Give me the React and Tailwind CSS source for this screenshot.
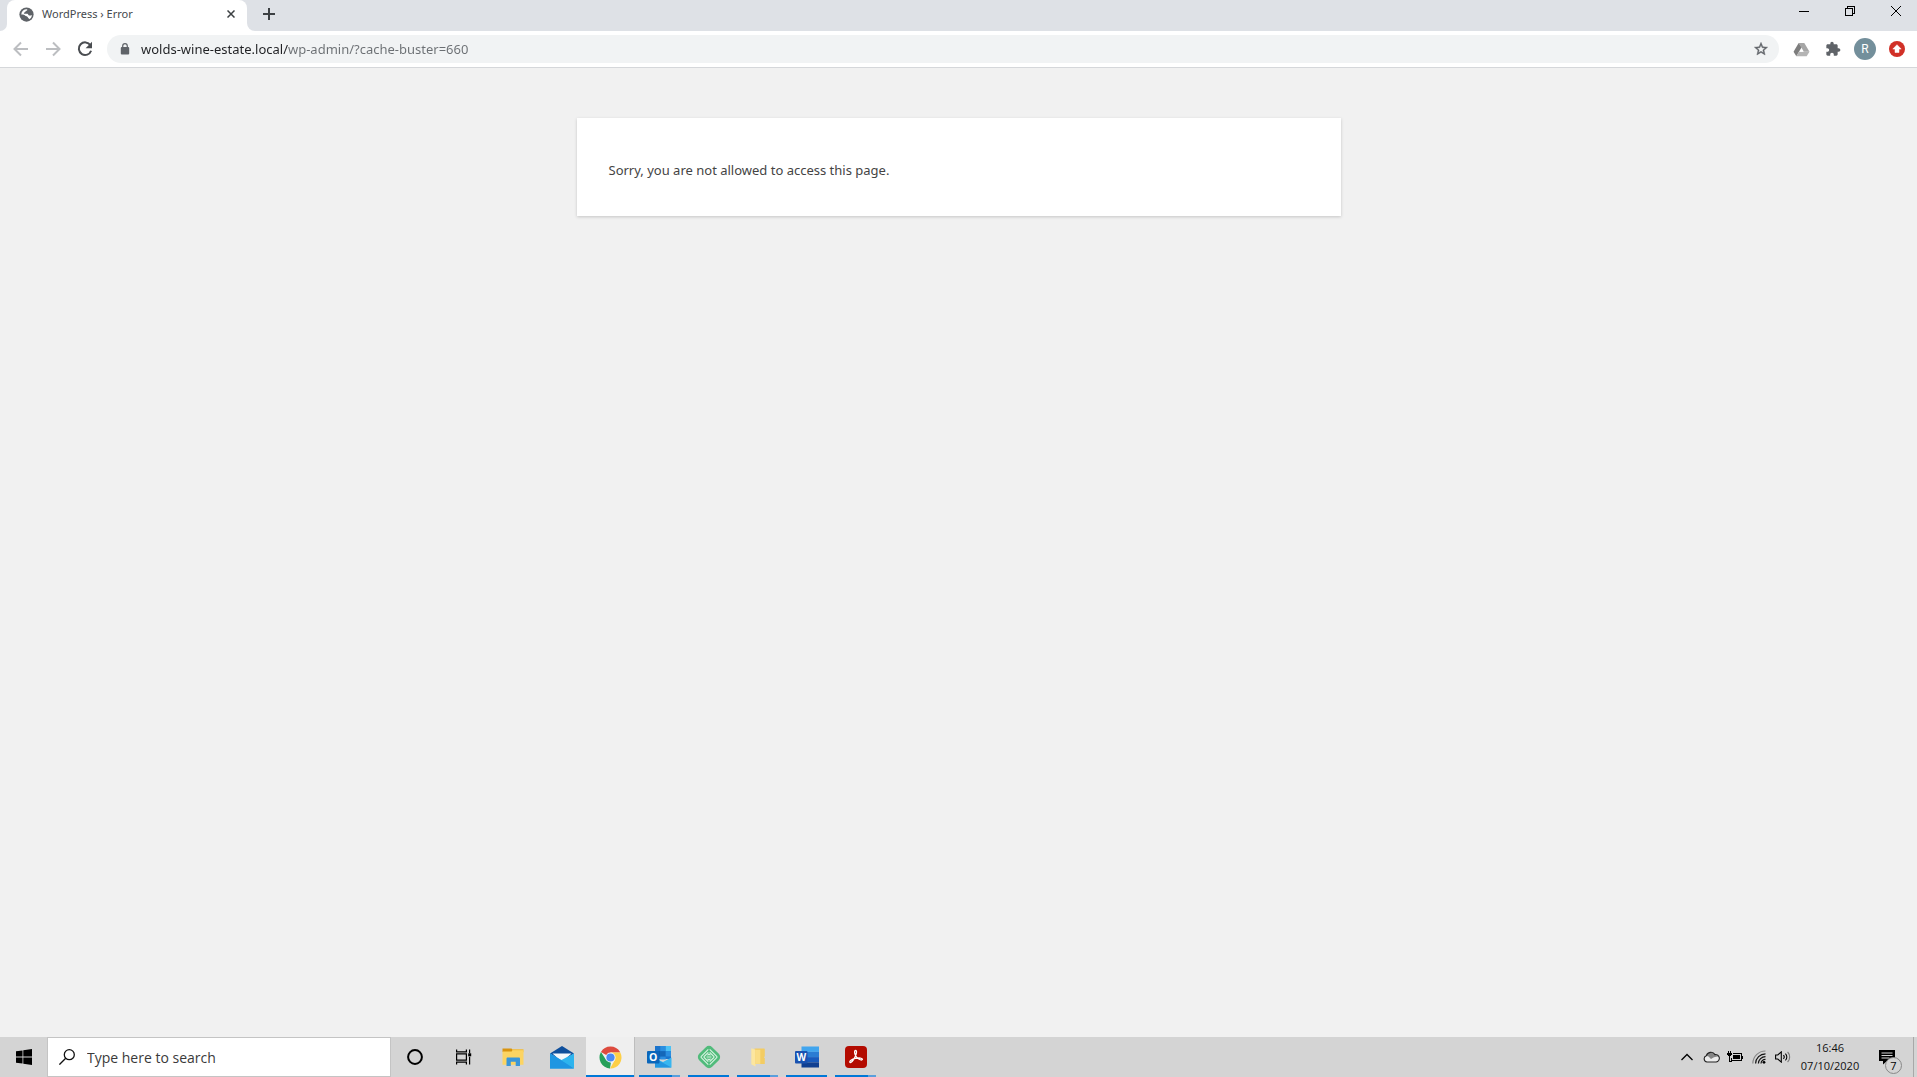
import React, { useState } from 'react';

function GlobeIcon() {
    return (
        <svg viewBox="0 0 16 16" className="w-[15px] h-[15px] shrink-0">
            <circle cx="8" cy="8" r="7.6" fill="#5f6368" />
            <path d="M8.600 2.300c.6.9.1 1.500-.9 1.700-.9.2-.6 1.300-1.500 1.600-.7.3-1.200.5-.9 1.200.3.700 2.600.3 3.600.5 1.100.3.900 1.600 2.100 1.800.8.1 1.700-.2 3-.3a5.700 5.700 0 0 1-3.200 4.200c-.1-1-1.300-1-1.400-2-.1-1.300-2.200-.8-3-1.900-.7-1-2-1.300-4-1.200A5.900 5.900 0 0 1 8.600 2.300z" fill="#fff" />
        </svg>
    );
}

function BackIcon() {
    return (
        <svg viewBox="0 0 16 16" className="w-4 h-4" fill="none" stroke="currentColor" strokeWidth="2">
            <path d="M15 8H2.500M8 1.500 1.500 8 8 14.500" />
        </svg>
    );
}

function ForwardIcon() {
    return (
        <svg viewBox="0 0 16 16" className="w-4 h-4" fill="none" stroke="currentColor" strokeWidth="2">
            <path d="M1 8h12.500M8 1.500 14.500 8 8 14.500" />
        </svg>
    );
}

function ReloadIcon() {
    return (
        <svg viewBox="0 0 16 16" className="w-4 h-4" fill="none">
            <path d="M13.400 4.200A6.300 6.300 0 1 0 14.100 9.700" stroke="#4a4d51" strokeWidth="2" />
            <path d="M15 .8v6.400H8.600z" fill="#4a4d51" />
        </svg>
    );
}

function LockIcon() {
    return (
        <svg viewBox="0 0 10 12" className="w-[10px] h-3 shrink-0">
            <rect x=".8" y="4" width="8.400" height="7.600" rx="1" fill="#5f6368" />
            <path d="M2.700 4.500V3a2.300 2.300 0 0 1 4.600 0v1.500" fill="none" stroke="#5f6368" strokeWidth="1.200" />
        </svg>
    );
}

function StarIcon() {
    return (
        <svg viewBox="0 0 24 24" className="w-4 h-4">
            <path d="M22 9.240l-7.190-.62L12 2 9.190 8.630 2 9.240l5.460 4.730L5.820 21 12 17.270 18.180 21l-1.630-7.030L22 9.240zM12 15.400l-3.760 2.270 1-4.280-3.320-2.880 4.380-.38L12 6.100l1.710 4.040 4.380.38-3.320 2.880 1 4.280L12 15.400z" fill="#5f6368" stroke="#5f6368" strokeWidth=".6" />
        </svg>
    );
}

function DriveIcon() {
    return (
        <svg viewBox="0 0 18 16" className="w-[17px] h-[15px]">
            <path d="M6 1h6l5.500 9.500h-6z" fill="#a6a6a6" />
            <path d="M6 1 .5 10.500l3 4.700L9 5.800z" fill="#7d7d7d" />
            <path d="M6.200 10.300h11.300l-3 4.900h-11z" fill="#b4b4b4" />
            <path d="M9 7.300 7.200 10.300h3.600z" fill="#fff" />
        </svg>
    );
}

function PuzzleIcon() {
    return (
        <svg viewBox="0 0 24 24" className="w-4 h-4">
            <path d="M20.500 11H19V7c0-1.100-.9-2-2-2h-4V3.500C13 2.120 11.880 1 10.500 1S8 2.120 8 3.500V5H4c-1.100 0-1.990.9-1.990 2v3.800H3.500c1.490 0 2.700 1.210 2.700 2.700s-1.210 2.700-2.700 2.700H2V20c0 1.100.9 2 2 2h3.800v-1.500c0-1.490 1.210-2.700 2.700-2.700 1.490 0 2.700 1.210 2.700 2.700V22H17c1.100 0 2-.9 2-2v-4h1.500c1.380 0 2.500-1.120 2.500-2.500S21.880 11 20.500 11z" fill="#5f6368" />
        </svg>
    );
}

function UploadBadge() {
    return (
        <svg viewBox="0 0 16 16" className="w-4 h-4">
            <circle cx="8" cy="8" r="8" fill="#d13027" />
            <path d="M8 3.700 12.200 8.100H10v3.400H6V8.100H3.800z" fill="#fff" stroke="#fff" strokeWidth=".5" strokeLinejoin="round" />
        </svg>
    );
}

function WindowsIcon() {
    return (
        <svg viewBox="0 0 16 16" className="w-4 h-4" fill="#000">
            <path d="M0 2.300 6.500 1.400v6.200H0zM7.300 1.300 16 0v7.600H7.300zM0 8.400h6.500v6.200L0 13.700zM7.300 8.400H16V16l-8.700-1.300z" />
        </svg>
    );
}

function MagnifierIcon() {
    return (
        <svg viewBox="0 0 16 16" className="w-4 h-4 shrink-0" fill="none" stroke="#111" strokeWidth="1.300">
            <circle cx="10.300" cy="5.700" r="5" />
            <path d="M6.700 9.300.4 15.600" />
        </svg>
    );
}

function CortanaIcon() {
    return (
        <svg viewBox="0 0 16 16" className="w-4 h-4">
            <circle cx="8" cy="8" r="6.900" fill="none" stroke="#000" strokeWidth="2" />
        </svg>
    );
}

function TaskViewIcon() {
    return (
        <svg viewBox="0 0 17 16" className="w-[17px] h-4" fill="none" stroke="#000" strokeWidth="1.200">
            <path d="M1.600.5v2.400h9.800V.5M1.600 15.500v-2.400h9.800v2.400M1.600 4.800h9.800v6.400H1.600zM14.600.5v3.800M14.600 7.800v7.700" />
            <path d="M13.200 4.300h3v3h-3z" fill="#000" stroke="none" />
        </svg>
    );
}

function ExplorerIcon() {
    return (
        <svg viewBox="0 0 22 20" className="w-[22px] h-5">
            <path d="M.5 1.500h9l1.500 1.800V5H.5z" fill="#d9940f" />
            <path d="M10 2.200h11.500v3H10z" fill="#f3bd3a" />
            <path d="M.5 4.600h9L11 3.300h10.500v14.400H.5z" fill="#fcd462" />
            <path d="M4.500 19v-7.300c0-.7.500-1.200 1.200-1.200h11.100c.7 0 1.200.5 1.200 1.200V19h-4.300v-4.300H8.800V19z" fill="#3a96d8" />
        </svg>
    );
}

function MailIcon() {
    return (
        <svg viewBox="0 0 24 23" className="w-6 h-[23px]">
            <path d="M12 0 24 7.500 12 15 0 7.500z" fill="#0f4f9c" />
            <path d="M2.500 7.500h19L12 16z" fill="#f4f8fc" />
            <path d="M0 7.500 14 15.500 24 22.500H0z" fill="#1f9be6" />
            <path d="M24 7.500v15L10.500 14.500z" fill="#2db4ee" />
            <path d="M0 22.500h24L11.500 14.500 0 7.500z" fill="#1e96e2" />
        </svg>
    );
}

function ChromeIcon() {
    return (
        <svg viewBox="0 0 24 24" className="w-[23px] h-[23px]">
            <path d="M12 12 2.040 6.250A11.500 11.500 0 0 1 21.960 6.250L22 6.700H12z" fill="#dd4b3e" />
            <path d="M2.040 6.250 7.450 14.600l5 2.600-1 6.280A11.500 11.500 0 0 1 2.040 6.250z" fill="#26a05a" />
            <path d="M16.550 14.600 11.500 23.500A11.500 11.500 0 0 0 22.220 6.750H12z" fill="#fdcf47" />
            <circle cx="12" cy="12" r="5.300" fill="#f4f6f8" />
            <circle cx="12" cy="12" r="4.300" fill="#4a8af4" />
        </svg>
    );
}

function OutlookIcon() {
    return (
        <svg viewBox="0 0 25 22" className="w-[25px] h-[22px]">
            <path d="M8 0h16v13H8z" fill="#1b74cc" />
            <path d="M13.300 0h5.400v5.200h-5.400zM13.300 10.400h5.400v3h-5.400z" fill="#2a8ee0" />
            <path d="M18.700 0H24v5.200h-5.300z" fill="#4cc2f5" />
            <path d="M8 5.200h5.300v5.200H8z" fill="#0f56a3" />
            <path d="M13.300 5.200h5.400v5.200h-5.400z" fill="#1467b8" />
            <path d="M18.700 5.200H24v5.200h-5.300z" fill="#2a8ee0" />
            <path d="M8 12.500 16 16l8.500-4.500v10H8z" fill="#38b6f0" />
            <path d="M8 12.500 24.500 21.500H8z" fill="#2496e0" />
            <rect x="0" y="5" width="12.500" height="12.500" rx="1" fill="#0a66ba" />
            <text x="6.250" y="15" textAnchor="middle" fontSize="10.500" fontWeight="700" fontFamily="Open Sans, sans-serif" fill="#fff">O</text>
        </svg>
    );
}

function LocalIcon() {
    return (
        <svg viewBox="0 0 24 24" className="w-6 h-6">
            <rect x="2.800" y="2.800" width="18.400" height="18.400" rx="4.500" transform="rotate(45 12 12)" fill="#51bb7b" />
            <g fill="none" stroke="#d6f3e0" strokeWidth="1.100">
                <path d="M11.300 4.300 4.300 11.300a1 1 0 0 0 0 1.400l7 7M12.700 4.300l7 7a1 1 0 0 1 0 1.400l-7 7" />
                <path d="M11.300 7.300 7.100 11.500v1l4.200 4.200M12.700 7.300l4.200 4.200v1l-4.200 4.200" />
                <path d="M9.500 12h5M10.500 10.200 12 9l1.500 1.200M10.500 13.800 12 15l1.500-1.200" />
            </g>
        </svg>
    );
}

function FolderIcon() {
    return (
        <svg viewBox="0 0 14 20" className="w-[14px] h-5">
            <path d="M3.500 1.500h9.700a.6.6 0 0 1 .6.6v7.100l-.9 1 .9 1v5.700H3.500z" fill="#f3cc63" />
            <path d="M.3 1.200 4.500 2.800v16.700L.3 17.200z" fill="#fce69f" />
            <path d="M4.500 2.800h4.800v14.100H4.500z" fill="#fadd86" />
        </svg>
    );
}

function WordIcon() {
    return (
        <svg viewBox="0 0 24 22" className="w-6 h-[22px]">
            <path d="M6.500.5H24v5.400H6.500z" fill="#41a5ee" />
            <path d="M6.500 5.900H24v5.200H6.500z" fill="#2b7cd3" />
            <path d="M6.500 11.100H24v5.200H6.500z" fill="#185abd" />
            <path d="M6.500 16.300H24v5.200H6.500z" fill="#103f91" />
            <rect x="0" y="5" width="12.500" height="12.500" rx="1" fill="#1a52b0" />
            <text x="6.250" y="14.800" textAnchor="middle" fontSize="10" fontWeight="700" fontFamily="Open Sans, sans-serif" fill="#fff">W</text>
        </svg>
    );
}

function AcrobatIcon() {
    return (
        <svg viewBox="0 0 22 22" className="w-[22px] h-[22px]">
            <rect width="22" height="22" rx="4" fill="#b30b00" />
            <path d="M10.500 4.500c1.600 0 1.200 3.200-.6 6.700-1.600 3.200-3.800 5.900-4.800 5.200-1.300-1 1.700-3.200 5.400-4 3.800-.8 7-.4 6.900.9-.1 1.500-3.500.4-5.800-2.200-2.200-2.500-2.600-6.600-1.100-6.600z" fill="none" stroke="#fff" strokeWidth="1.300" />
        </svg>
    );
}

const apps = [
    { name: 'File Explorer', icon: ExplorerIcon },
    { name: 'Mail', icon: MailIcon },
    { name: 'Google Chrome', icon: ChromeIcon, running: true, active: true },
    { name: 'Outlook', icon: OutlookIcon, running: true, grouped: true },
    { name: 'Local', icon: LocalIcon, running: true },
    { name: 'Documents', icon: FolderIcon, running: true, grouped: true },
    { name: 'Word', icon: WordIcon, running: true },
    { name: 'Acrobat Reader', icon: AcrobatIcon, running: true, grouped: true },
];

function TabStrip() {
    return (
        <div className="flex h-[31px] bg-white">
            <div className="w-[7px] bg-[#dee1e6] rounded-br-lg"></div>
            <div className="w-60 bg-[#dee1e6]">
                <div className="h-full flex items-center pl-3 pr-2 pb-[3px] bg-white rounded-t-lg">
                    <GlobeIcon />
                    <span className="flex-1 ml-2 text-[11px] leading-4 text-[#45494d] whitespace-nowrap">WordPress › Error</span>
                    <button aria-label="Close tab" className="w-4 h-4 flex items-center justify-center">
                        <svg viewBox="0 0 8 8" className="w-2 h-2" stroke="#3c4043" strokeWidth="1.500">
                            <path d="M.5.500l7 7M7.500.500l-7 7" />
                        </svg>
                    </button>
                </div>
            </div>
            <div className="flex-1 flex justify-between bg-[#dee1e6] rounded-bl-lg">
                <button aria-label="New tab" className="w-11 h-7 flex items-center justify-center">
                    <svg viewBox="0 0 12 12" className="w-3 h-3" stroke="#3c4043" strokeWidth="2">
                        <path d="M6 0v12M0 6h12" />
                    </svg>
                </button>
                <div className="flex h-[22px]">
                    <button aria-label="Minimize" className="w-[46px] pl-1 flex items-center justify-center">
                        <svg viewBox="0 0 10 10" className="w-[10px] h-[10px]" stroke="#000" shapeRendering="crispEdges">
                            <path d="M0 5.500h10" />
                        </svg>
                    </button>
                    <button aria-label="Restore" className="w-[46px] pl-1 flex items-center justify-center">
                        <svg viewBox="0 0 10 10" className="w-[10px] h-[10px]" fill="none" stroke="#000" shapeRendering="crispEdges">
                            <path d="M.5 2.500h7v7h-7zM2.500 2.500v-2h7v7h-2" />
                        </svg>
                    </button>
                    <button aria-label="Close" className="w-[46px] pl-1 flex items-center justify-center">
                        <svg viewBox="0 0 10 10" className="w-[10px] h-[10px]" stroke="#000">
                            <path d="M0 0l10 10M10 0 0 10" />
                        </svg>
                    </button>
                </div>
            </div>
        </div>
    );
}

function Toolbar() {
    const [url, setUrl] = useState('wolds-wine-estate.local/wp-admin/?cache-buster=660');

    return (
        <div className="flex items-center h-[37px] pl-[5px] pr-1 bg-white border-b border-[#d5d7da]">
            <button aria-label="Back" className="w-8 h-8 flex items-center justify-center text-[#bcbec1]"><BackIcon /></button>
            <button aria-label="Forward" className="w-8 h-8 flex items-center justify-center text-[#bcbec1]"><ForwardIcon /></button>
            <button aria-label="Reload" className="w-8 h-8 flex items-center justify-center"><ReloadIcon /></button>
            <div className="flex-1 flex items-center h-7 mx-1.5 pl-[13px] pr-[10px] bg-[#f1f3f4] rounded-full">
                <LockIcon />
                {/* host part is darker than the path */}
                <input
                    aria-label="Address"
                    value={url}
                    onChange={(e) => setUrl(e.target.value)}
                    className="flex-1 ml-[11px] text-[13px] leading-5 outline-none text-transparent bg-clip-text bg-[linear-gradient(to_right,#202124_147px,#6b6f73_147px)]"
                />
                <button aria-label="Bookmark this page"><StarIcon /></button>
            </div>
            <button aria-label="Google Drive" className="w-8 h-8 flex items-center justify-center"><DriveIcon /></button>
            <button aria-label="Extensions" className="w-8 h-8 flex items-center justify-center"><PuzzleIcon /></button>
            <button aria-label="Profile" className="w-8 h-8 flex items-center justify-center">
                <span className="w-[22px] h-[22px] flex items-center justify-center rounded-full bg-[#738f9b] text-white text-xs leading-4 font-['Roboto',sans-serif]">R</span>
            </button>
            <button aria-label="Update" className="w-8 h-8 flex items-center justify-center"><UploadBadge /></button>
        </div>
    );
}

function TaskbarApp({ app }) {
    return (
        <button aria-label={app.name} className={`w-[49px] flex flex-col ${app.active ? 'bg-[#efefef] border-r border-[#bdbdbd]' : ''}`}>
            <span className="flex-1 w-full flex items-center justify-center pt-0.5"><app.icon /></span>
            <span className={`flex h-0.5 w-full ${app.active ? '' : 'px-1'}`}>
                {app.running && <span className="flex-1 bg-[#0078d7]"></span>}
                {app.grouped && <span className="w-2 bg-[#5a9fdc]"></span>}
            </span>
        </button>
    );
}

function Tray() {
    return (
        <div className="flex items-center">
            <button aria-label="Show hidden icons" className="w-6 flex justify-center">
                <svg viewBox="0 0 12 8" className="w-3 h-2" fill="none" stroke="#000" strokeWidth="1.300"><path d="M.5 7 6 1.500 11.500 7" /></svg>
            </button>
            <button aria-label="OneDrive" className="w-6 flex justify-center">
                <svg viewBox="0 0 17 12" className="w-[17px] h-3">
                    <path d="M4 11a3.200 3.200 0 0 1-.7-6.200A4.800 4.800 0 0 1 12 3.600a3.700 3.700 0 0 1 1.200 7.400z" fill="#ececec" />
                    <path d="M3.300 4.800A4.800 4.800 0 0 1 12 3.600l3.600 1.600-4.600 1L8 8 5.500 5.600z" fill="#858585" />
                    <path d="M4 11a3.200 3.200 0 0 1-.7-6.200A4.800 4.800 0 0 1 12 3.600a3.700 3.700 0 0 1 1.200 7.400z" fill="none" stroke="#222" strokeWidth="1.100" />
                </svg>
            </button>
            <button aria-label="Battery" className="w-6 flex justify-center">
                <svg viewBox="0 0 16 12" className="w-4 h-3" fill="none" stroke="#000" shapeRendering="crispEdges">
                    <path d="M6 2.500h8.500v7h-10V7M15.500 4.500v3" />
                    <path d="M6 4h7v4H6z" fill="#000" stroke="none" />
                    <path d="M1.500 0v2M3.500 0v2M2.500 5v5h2" />
                    <path d="M0 2h5v2H4v1H1V4H0z" fill="#000" stroke="none" />
                </svg>
            </button>
            <button aria-label="Network" className="w-6 flex justify-center">
                <svg viewBox="0 0 14 14" className="w-[14px] h-[14px]" fill="none" strokeWidth="1.200">
                    <path d="M.8 13.500A12.700 12.700 0 0 1 13.500 1" stroke="#888" />
                    <path d="M3.600 13.500a9.900 9.900 0 0 1 9.900-9.700M6.400 13.500a7.100 7.100 0 0 1 7.100-6.900M9 13.500a4.500 4.500 0 0 1 4.500-4.200" stroke="#111" />
                    <circle cx="12" cy="12.300" r="1.400" fill="#000" />
                </svg>
            </button>
            <button aria-label="Volume" className="w-6 flex justify-center">
                <svg viewBox="0 0 17 12" className="w-[17px] h-3" fill="none" stroke="#000" strokeWidth="1.100">
                    <path d="M.6 4h2.200L6.300.9v10.200L2.800 8H.6zM8.400 4.200a2.600 2.600 0 0 1 0 3.600M10.400 2.600a4.800 4.800 0 0 1 0 6.800" />
                    <path d="M12.600 1a7.100 7.100 0 0 1 0 10" stroke="#777" />
                </svg>
            </button>
            <button className="w-[70px] text-[11px] leading-[18px] text-[#111] text-center">
                <div>16:46</div>
                <div>07/10/2020</div>
            </button>
            <button aria-label="Notifications" className="relative w-11 h-10 flex items-center justify-center">
                <svg viewBox="0 0 16 16" className="w-4 h-4">
                    <path d="M0 1h16v11H8l-4 3.500V12H0z" fill="#000" />
                    <path d="M2.500 4h11M2.500 6.500h11M2.500 9h8" stroke="#d4d4d4" />
                </svg>
                <span className="absolute left-5 top-5 w-[17px] h-[17px] flex items-center justify-center rounded-full border border-[#888] bg-[#d4d4d4] text-[11px] leading-4 text-black">7</span>
            </button>
            <div className="w-1 h-10 ml-1 border-l border-[#a8a8a8]"></div>
        </div>
    );
}

function Taskbar() {
    return (
        <footer className="flex justify-between h-10 bg-[#d4d4d4] font-['Open_Sans','Noto_Sans',sans-serif]">
            <div className="flex">
                <button aria-label="Start" className="w-[47px] flex items-center justify-center"><WindowsIcon /></button>
                <label className="flex items-center w-[344px] pl-[11px] bg-white border border-[#c4c4c4]">
                    <MagnifierIcon />
                    <input
                        type="text"
                        aria-label="Type here to search"
                        placeholder="Type here to search"
                        className="flex-1 ml-3 pt-0.5 text-sm leading-5 outline-none placeholder:text-[#3a3a3a]"
                    />
                </label>
                <button aria-label="Cortana" className="w-12 flex items-center justify-center"><CortanaIcon /></button>
                <button aria-label="Task View" className="w-[49px] flex items-center justify-center"><TaskViewIcon /></button>
                {apps.map((app) => (
                    <TaskbarApp key={app.name} app={app} />
                ))}
            </div>
            <Tray />
        </footer>
    );
}

export default function App() {
    return (
        <div className="min-h-screen flex flex-col bg-[#f1f1f1] font-['Noto_Sans','Open_Sans',sans-serif]">
            <header>
                <TabStrip />
                <Toolbar />
            </header>
            <main className="flex-1 pt-[50px]">
                <div className="max-w-[764px] mx-auto px-8 pt-[42px] pb-[35px] bg-white shadow-[0_1px_3px_rgba(0,0,0,0.18)]">
                    <p className="text-[13px] leading-[21px] text-[#444]">Sorry, you are not allowed to access this page.</p>
                </div>
            </main>
            <Taskbar />
        </div>
    );
}
